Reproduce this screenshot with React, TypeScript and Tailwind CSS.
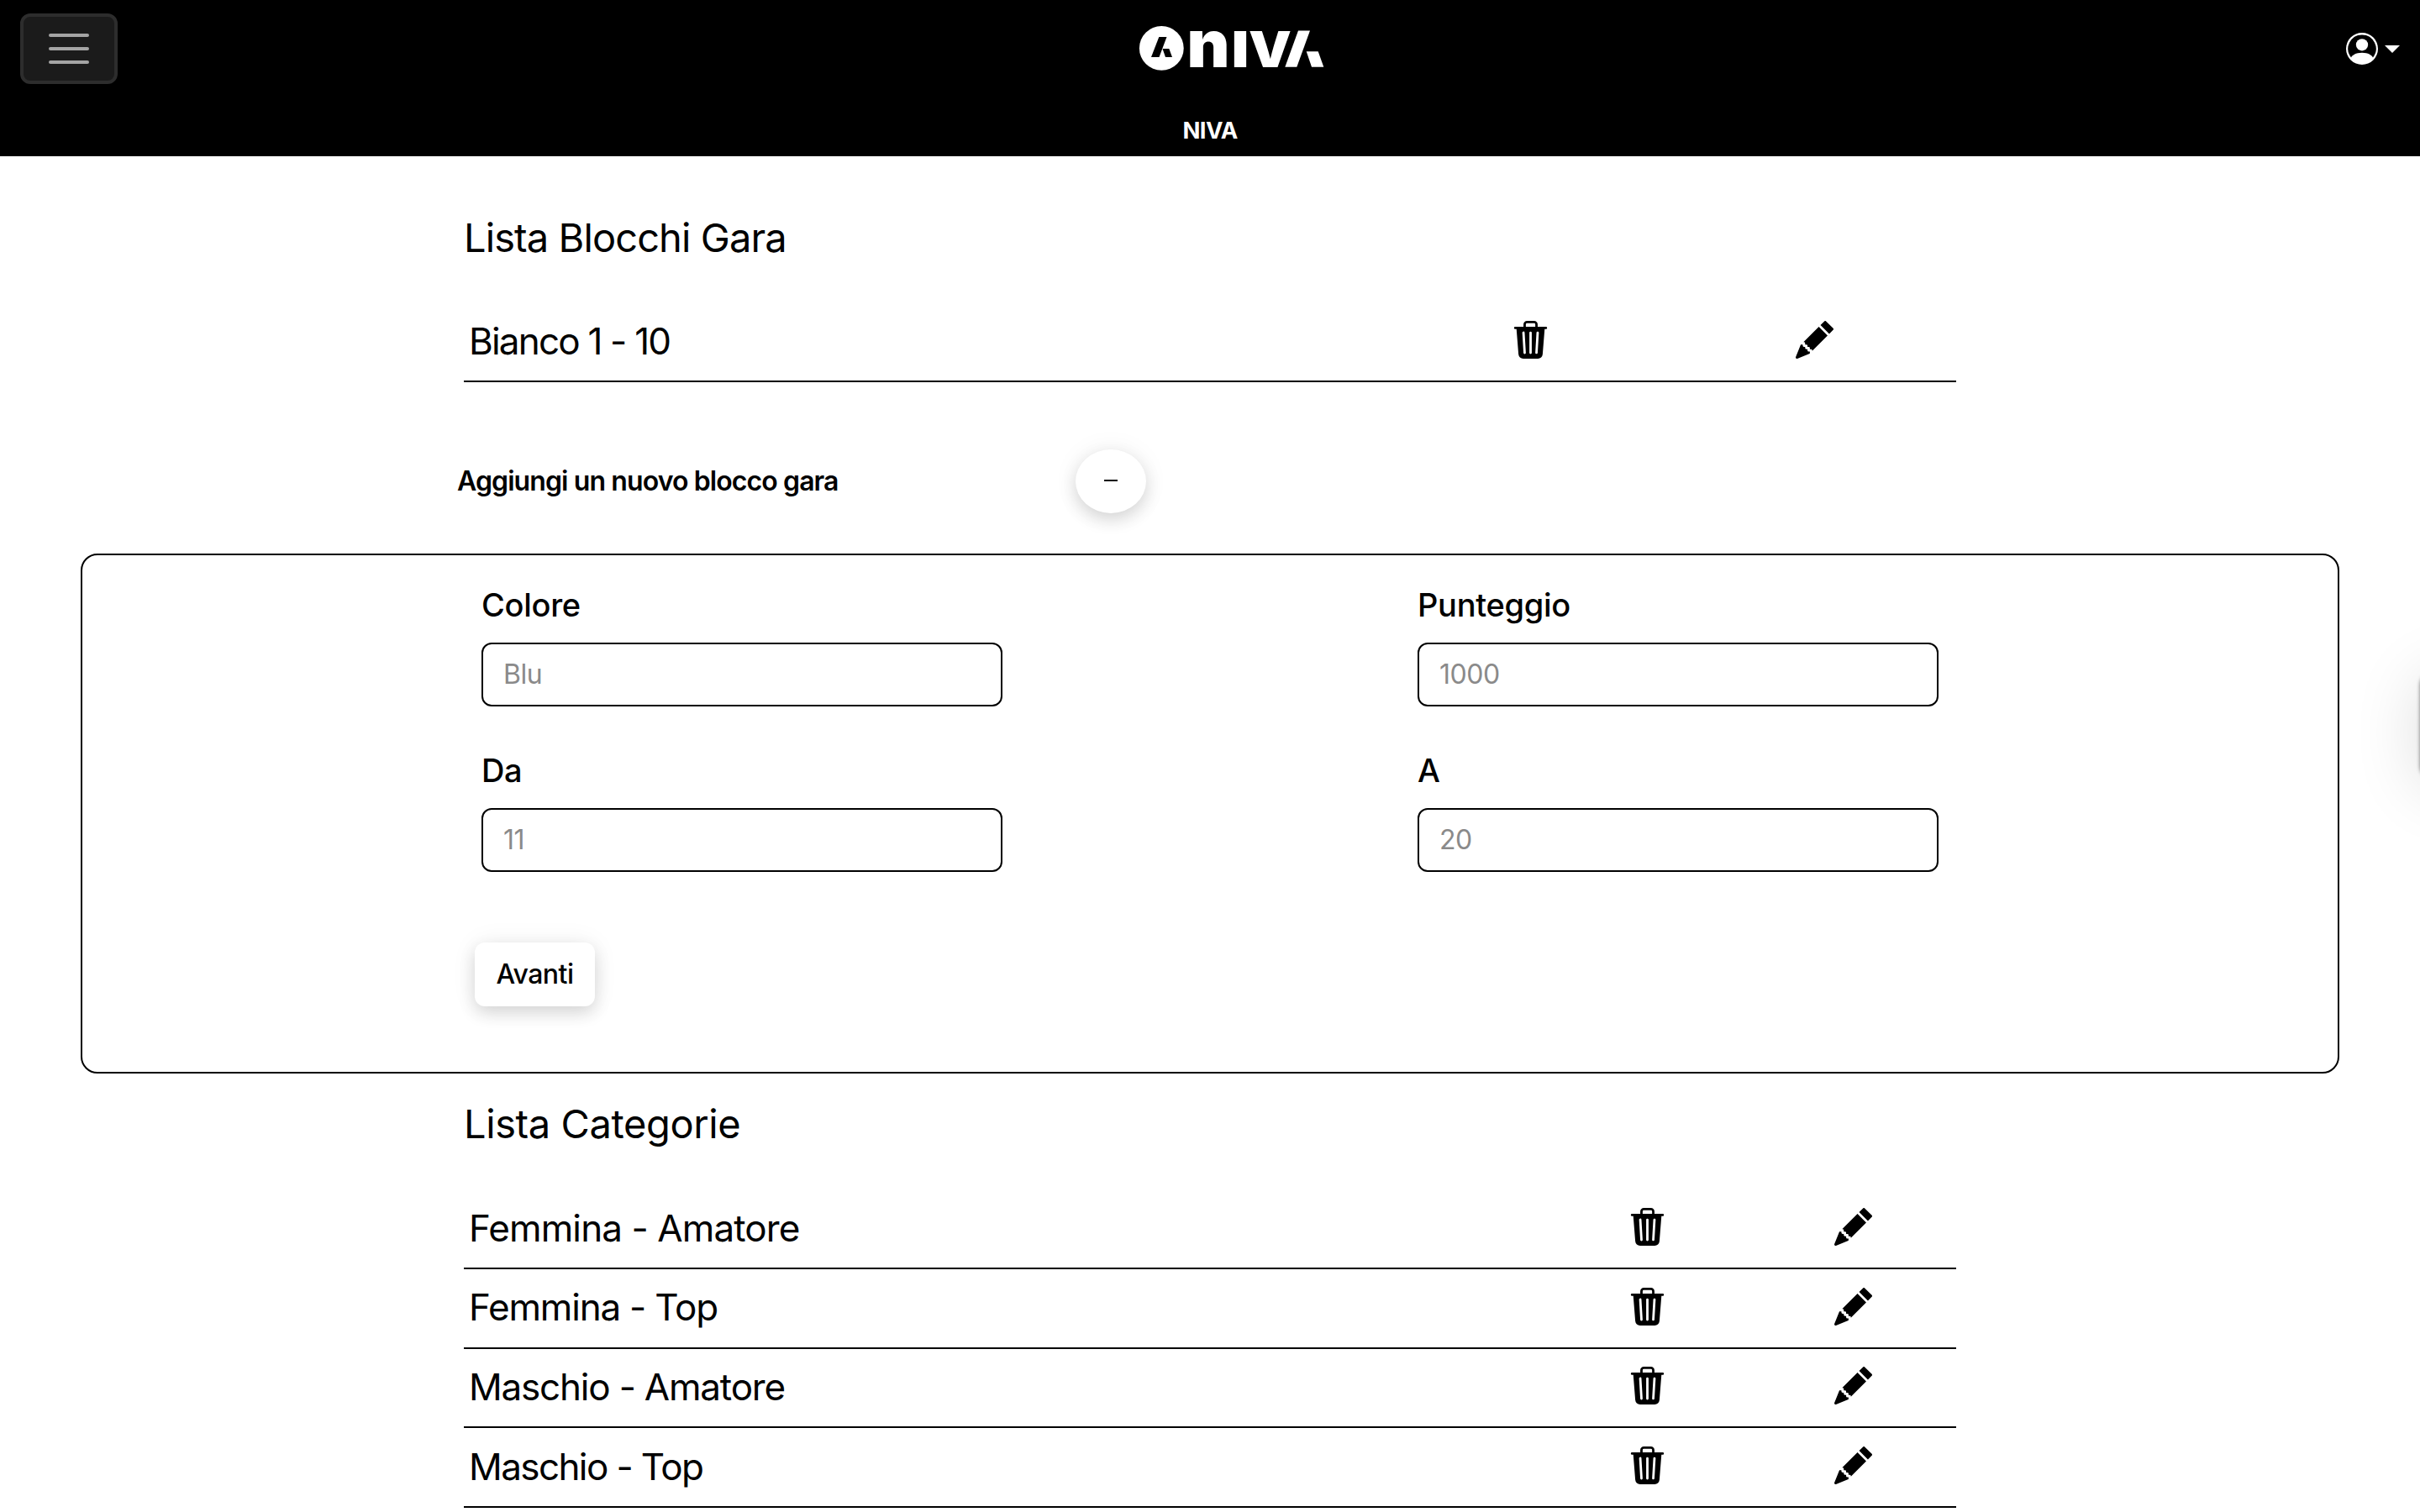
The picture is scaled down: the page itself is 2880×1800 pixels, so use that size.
import React, { FC } from 'react';
import { BsPencilFill, BsPersonCircle, BsTrash3Fill } from 'react-icons/bs';

interface ListRowProps {
  label: string;
  labelClass: string;
  actionsClass: string;
}

interface FieldProps {
  label: string;
  placeholder: string;
}

const blocchi = [{ nome: 'Bianco 1 - 10', labelClass: 'tracking-[-1.8px]' }];

const categorie = [
  { nome: 'Femmina - Amatore', labelClass: 'tracking-[-0.9px]' },
  { nome: 'Femmina - Top', labelClass: 'tracking-[-1.2px]' },
  { nome: 'Maschio - Amatore', labelClass: 'tracking-[-1.2px]' },
  { nome: 'Maschio - Top', labelClass: 'tracking-[-1.6px]' },
];

const Logo: FC = () => (
  <svg className="overflow-visible" width="220" height="54" viewBox="0 0 220 54" fill="#fff">
    <circle cx="26.3" cy="26.4" r="26.4" />
    <g fill="#000">
      <polygon points="14,37 23.5,37 32.5,13 23.3,13" />
      <polygon points="27.5,27 35.3,27 39,37 31,37" />
    </g>
    <g fontFamily="Inter, sans-serif" fontWeight="900">
      <text x="56.5" y="49" fontSize="78" textLength="51" lengthAdjust="spacingAndGlyphs">
        n
      </text>
      <text x="109.5" y="49" fontSize="59.5" textLength="21" lengthAdjust="spacingAndGlyphs">
        I
      </text>
      <text x="130" y="49" fontSize="59.5" textLength="51" lengthAdjust="spacingAndGlyphs">
        V
      </text>
    </g>
    <polygon points="173.3,48.7 187.3,48.7 203,5.4 189,5.4" />
    <polygon points="198.7,30.3 212.7,30.3 219.3,48.7 205,48.7" />
  </svg>
);

const Header: FC = () => (
  <header className="h-[186px] bg-black text-white">
    <div className="flex h-[116px] items-center justify-between px-6">
      <button className="flex h-[84px] w-[116px] flex-col items-center justify-center gap-3 rounded-xl border-4 border-[#2d2d2d] bg-[#1b1b1b]">
        <span className="h-1 w-12 rounded-full bg-[#a4a4a4]" />
        <span className="h-1 w-12 rounded-full bg-[#a4a4a4]" />
        <span className="h-1 w-12 rounded-full bg-[#a4a4a4]" />
      </button>
      <Logo />
      <div className="flex items-center gap-2">
        <BsPersonCircle className="h-[38px] w-[38px]" />
        <svg width="18" height="9" viewBox="0 0 18 9" fill="currentColor">
          <path d="M0 0h18L9 9z" />
        </svg>
      </div>
    </div>
    <div className="flex h-[70px] items-center justify-center pt-2.5 text-[27.5px] font-bold tracking-[-0.6px]">
      NIVA
    </div>
  </header>
);

const ListRow: FC<ListRowProps> = ({ label, labelClass, actionsClass }) => (
  <li className="flex h-[94.67px] items-center border-b-2 border-black">
    <span className={`flex-1 pb-0.5 pl-1.5 text-[44px] leading-none ${labelClass}`}>{label}</span>
    <span className={`flex justify-center pb-1 ${actionsClass}`}>
      <BsTrash3Fill className="h-[45px] w-[45px]" />
    </span>
    <span className={`flex justify-center pb-1 ${actionsClass}`}>
      <BsPencilFill className="h-[45px] w-[45px]" />
    </span>
  </li>
);

const Field: FC<FieldProps> = ({ label, placeholder }) => (
  <label className="block w-[620px]">
    <span className="mb-[15px] block h-[60px] text-[38px] font-medium leading-[60px] tracking-[-0.3px]">
      {label}
    </span>
    <input
      className="block h-[76px] w-full rounded-xl border-2 border-black bg-white px-6 text-[32px] tracking-[-0.5px] placeholder:text-[#8a8a8a]"
      placeholder={placeholder}
    />
  </label>
);

const App: FC = () => (
  <div className="relative h-[1800px] overflow-hidden bg-white font-['Inter',sans-serif] text-black">
    <Header />

    <section className="mx-auto w-[1776px] pt-[68px]">
      <h2 className="mb-[48.33px] h-[58px] text-[47px] leading-[58px] tracking-[-0.9px]">
        Lista Blocchi Gara
      </h2>
      <ul>
        {blocchi.map(({ nome, labelClass }) => (
          <ListRow key={nome} label={nome} labelClass={labelClass} actionsClass="w-[338px]" />
        ))}
      </ul>
    </section>

    <div className="mx-auto mt-20 flex w-[1792px] items-center">
      <p className="w-[736px] text-[32px] font-semibold tracking-[-0.9px]">
        Aggiungi un nuovo blocco gara
      </p>
      <button className="flex h-[76px] w-[84px] items-center justify-center rounded-[50%] bg-white shadow-[0_8px_20px_rgba(0,0,0,0.14),0_0_32px_rgba(0,0,0,0.06)]">
        <span className="-mt-0.5 h-0.5 w-4 bg-black" />
      </button>
    </div>

    <section className="mx-24 mt-12 h-[619px] rounded-[20px] border-2 border-black pt-[29px]">
      <form className="mx-auto w-[1734px]">
        <div className="flex justify-between">
          <Field label="Colore" placeholder="Blu" />
          <Field label="Punteggio" placeholder="1000" />
        </div>
        <div className="mt-[46px] flex justify-between">
          <Field label="Da" placeholder="11" />
          <Field label="A" placeholder="20" />
        </div>
        <button
          type="button"
          className="-ml-2 mt-[84px] h-[76px] w-[143px] rounded-xl bg-white pt-px text-[32px] font-medium tracking-[-0.5px] shadow-[0_8px_20px_rgba(0,0,0,0.14),0_0_32px_rgba(0,0,0,0.06)]"
        >
          Avanti
        </button>
      </form>
    </section>

    <section className="mx-auto w-[1776px] pt-[31px]">
      <h2 className="mb-[49.33px] h-[58px] text-[47px] leading-[58px] tracking-[-0.4px]">
        Lista Categorie
      </h2>
      <ul>
        {categorie.map(({ nome, labelClass }) => (
          <ListRow key={nome} label={nome} labelClass={labelClass} actionsClass="w-[245px]" />
        ))}
      </ul>
    </section>

    <div className="absolute left-full top-[800px] h-[128px] w-[128px] rounded-2xl bg-white shadow-[0_8px_80px_rgba(0,0,0,0.14),0_0_4px_rgba(0,0,0,0.5)]" />
  </div>
);

export default App;
